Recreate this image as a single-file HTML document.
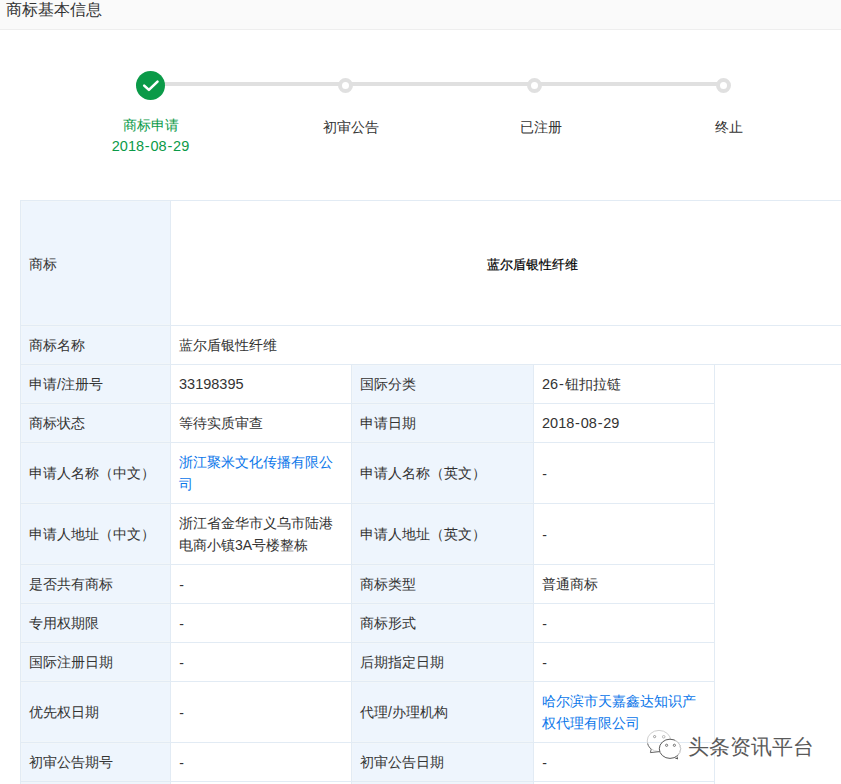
<!DOCTYPE html>
<html><head><meta charset="utf-8">
<style>
*{margin:0;padding:0;box-sizing:border-box}
html,body{width:841px;height:784px;overflow:hidden;background:#fff}
body{position:relative;font-family:"Liberation Sans",sans-serif;color:#333;font-size:14px}
.hd{position:absolute;left:0;top:0;width:841px;height:30px;background:#fafafa;border-bottom:1px solid #eeeeee}
.hd span{position:absolute;left:6px;top:0;font-size:16px;line-height:19px;color:#333}
.line{position:absolute;left:150px;top:82px;width:574px;height:4px;background:#e0e0e0}
.chk{position:absolute;left:136px;top:71px;width:29px;height:29px;border-radius:50%;background:#0b9a48}
.ring{position:absolute;width:15px;height:15px;border-radius:50%;border:4px solid #e0e0e0;background:#fff;top:78px}
.n{font-size:14.5px}
.hy{padding:0 .8px}
.d{position:relative;top:1px;padding-left:.3px}
.st{position:absolute;top:115px;width:120px;text-align:center;line-height:21px;white-space:nowrap}
.g{color:#0b9a48}
.h{position:absolute;height:1px;background:#e2ebf4}
.v{position:absolute;width:1px;background:#e2ebf4}
.bg{position:absolute;background:#eef5fd;box-shadow:inset 1px 1px 0 #f1f6fa,inset 0 -1px 0 #f1f6fa}
.c{position:absolute;padding:0 0 0 8px;line-height:22px;white-space:nowrap}
.b{color:#0a76ea}
.wm{position:absolute;left:688px;top:734px;font-size:21px;line-height:25px;color:#5a5a5a}
</style></head><body>
<div class="hd"><span>商标基本信息</span></div>

<div class="line"></div>
<div class="chk"><svg width="29" height="29" viewBox="0 0 29 29"><path d="M8.2 14.6 L12.9 18.9 L21.5 10.6" fill="none" stroke="#fff" stroke-width="2.6" stroke-linecap="round" stroke-linejoin="round"/></svg></div>
<div class="ring" style="left:338px"></div>
<div class="ring" style="left:527px"></div>
<div class="ring" style="left:716px"></div>
<div class="st g" style="left:90.5px">商标申请<br><span class="n">2018<span class="hy">-</span>08<span class="hy">-</span>29</span></div>
<div class="st" style="left:291px;top:117px">初审公告</div>
<div class="st" style="left:480.5px;top:117px">已注册</div>
<div class="st" style="left:669px;top:117px">终止</div>

<!-- table backgrounds -->
<div class="bg" style="left:21px;top:201px;width:149px;height:124px"></div>
<div class="bg" style="left:21px;top:326px;width:149px;height:38px"></div>
<div class="bg" style="left:21px;top:365px;width:149px;height:38px"></div>
<div class="bg" style="left:352px;top:365px;width:181px;height:38px"></div>
<div class="bg" style="left:21px;top:404px;width:149px;height:38px"></div>
<div class="bg" style="left:352px;top:404px;width:181px;height:38px"></div>
<div class="bg" style="left:21px;top:443px;width:149px;height:60px"></div>
<div class="bg" style="left:352px;top:443px;width:181px;height:60px"></div>
<div class="bg" style="left:21px;top:504px;width:149px;height:60px"></div>
<div class="bg" style="left:352px;top:504px;width:181px;height:60px"></div>
<div class="bg" style="left:21px;top:565px;width:149px;height:38px"></div>
<div class="bg" style="left:352px;top:565px;width:181px;height:38px"></div>
<div class="bg" style="left:21px;top:604px;width:149px;height:38px"></div>
<div class="bg" style="left:352px;top:604px;width:181px;height:38px"></div>
<div class="bg" style="left:21px;top:643px;width:149px;height:38px"></div>
<div class="bg" style="left:352px;top:643px;width:181px;height:38px"></div>
<div class="bg" style="left:21px;top:682px;width:149px;height:60px"></div>
<div class="bg" style="left:352px;top:682px;width:181px;height:60px"></div>
<div class="bg" style="left:21px;top:743px;width:149px;height:38px"></div>
<div class="bg" style="left:352px;top:743px;width:181px;height:38px"></div>
<div class="bg" style="left:21px;top:782px;width:149px;height:18px"></div>
<div class="bg" style="left:352px;top:782px;width:181px;height:18px"></div>
<!-- horizontal lines -->
<div class="h" style="left:20px;top:200px;width:821px"></div>
<div class="h" style="left:20px;top:325px;width:821px"></div>
<div class="h" style="left:20px;top:364px;width:821px"></div>
<div class="h" style="left:20px;top:403px;width:695px"></div>
<div class="h" style="left:20px;top:442px;width:695px"></div>
<div class="h" style="left:20px;top:503px;width:695px"></div>
<div class="h" style="left:20px;top:564px;width:695px"></div>
<div class="h" style="left:20px;top:603px;width:695px"></div>
<div class="h" style="left:20px;top:642px;width:695px"></div>
<div class="h" style="left:20px;top:681px;width:695px"></div>
<div class="h" style="left:20px;top:742px;width:695px"></div>
<div class="h" style="left:20px;top:781px;width:695px"></div>
<!-- vertical lines -->
<div class="v" style="left:20px;top:200px;height:584px"></div>
<div class="v" style="left:170px;top:200px;height:584px"></div>
<div class="v" style="left:351px;top:364px;height:420px"></div>
<div class="v" style="left:533px;top:364px;height:420px"></div>
<div class="v" style="left:714px;top:364px;height:420px"></div>

<!-- cells -->
<div class="c" style="left:21px;top:253px">商标</div>
<div class="c" style="left:479px;top:254px;font-family:'Liberation Serif',serif;font-size:13px;color:#000;-webkit-text-stroke:0.2px #000">蓝尔盾银性纤维</div>

<div class="c" style="left:21px;top:334px">商标名称</div>
<div class="c" style="left:171px;top:334px">蓝尔盾银性纤维</div>

<div class="c" style="left:21px;top:373px">申请/注册号</div>
<div class="c" style="left:171px;top:373px"><span class="n">33198395</span></div>
<div class="c" style="left:352px;top:373px">国际分类</div>
<div class="c" style="left:534px;top:373px"><span class="n">26<span class="hy">-</span></span>钮扣拉链</div>

<div class="c" style="left:21px;top:412px">商标状态</div>
<div class="c" style="left:171px;top:412px">等待实质审查</div>
<div class="c" style="left:352px;top:412px">申请日期</div>
<div class="c" style="left:534px;top:412px"><span class="n">2018<span class="hy">-</span>08<span class="hy">-</span>29</span></div>

<div class="c" style="left:21px;top:462px">申请人名称（中文）</div>
<div class="c b" style="left:171px;top:451px">浙江聚米文化传播有限公<br>司</div>
<div class="c" style="left:352px;top:462px">申请人名称（英文）</div>
<div class="c" style="left:534px;top:462px"><span class="d">-</span></div>

<div class="c" style="left:21px;top:523px">申请人地址（中文）</div>
<div class="c" style="left:171px;top:512px">浙江省金华市义乌市陆港<br>电商小镇3A号楼整栋</div>
<div class="c" style="left:352px;top:523px">申请人地址（英文）</div>
<div class="c" style="left:534px;top:523px"><span class="d">-</span></div>

<div class="c" style="left:21px;top:573px">是否共有商标</div>
<div class="c" style="left:171px;top:573px"><span class="d">-</span></div>
<div class="c" style="left:352px;top:573px">商标类型</div>
<div class="c" style="left:534px;top:573px">普通商标</div>

<div class="c" style="left:21px;top:612px">专用权期限</div>
<div class="c" style="left:171px;top:612px"><span class="d">-</span></div>
<div class="c" style="left:352px;top:612px">商标形式</div>
<div class="c" style="left:534px;top:612px"><span class="d">-</span></div>

<div class="c" style="left:21px;top:651px">国际注册日期</div>
<div class="c" style="left:171px;top:651px"><span class="d">-</span></div>
<div class="c" style="left:352px;top:651px">后期指定日期</div>
<div class="c" style="left:534px;top:651px"><span class="d">-</span></div>

<div class="c" style="left:21px;top:701px">优先权日期</div>
<div class="c" style="left:171px;top:701px"><span class="d">-</span></div>
<div class="c" style="left:352px;top:701px">代理/办理机构</div>
<div class="c b" style="left:534px;top:690px">哈尔滨市天嘉鑫达知识产<br>权代理有限公司</div>

<div class="c" style="left:21px;top:751px">初审公告期号</div>
<div class="c" style="left:171px;top:751px"><span class="d">-</span></div>
<div class="c" style="left:352px;top:751px">初审公告日期</div>
<div class="c" style="left:534px;top:751px"><span class="d">-</span></div>

<!-- watermark -->
<svg style="position:absolute;left:642px;top:726px" width="44" height="36" viewBox="0 0 44 36">
<ellipse cx="17" cy="15" rx="11.8" ry="10.6" fill="none" stroke="#d0d0d0" stroke-width="1"/>
<path d="M5.6 17.5 C6.3 20 7.5 21.8 9.2 23.2" fill="none" stroke="#777" stroke-width="1"/>
<path d="M9.2 23.2 L8.4 26.6 L17.8 25.6" fill="none" stroke="#666" stroke-width="1"/>
<ellipse cx="28" cy="22.8" rx="10.7" ry="9.6" fill="#fff" stroke="#5a5a5a" stroke-width="1"/>
<path d="M32.5 31.6 L35.6 33 L35 30.4" fill="#fff" stroke="#5a5a5a" stroke-width="1"/>
<path d="M33 14.6 C36.5 16.5 38.7 19.5 38.7 23 C38.7 25.5 37.8 27.5 36.5 29" fill="none" stroke="#fff" stroke-opacity="0.65" stroke-width="1.6"/>
<circle cx="12.6" cy="10.6" r="1.1" fill="none" stroke="#888" stroke-width="0.8"/>
<circle cx="21.7" cy="10.8" r="1.3" fill="none" stroke="#aaa" stroke-width="0.8"/>
<circle cx="24.6" cy="19.3" r="1.1" fill="none" stroke="#555" stroke-width="0.8"/>
<circle cx="32.4" cy="19.3" r="1.1" fill="none" stroke="#555" stroke-width="0.8"/>
</svg>
<div class="wm">头条资讯平台</div>
</body></html>
